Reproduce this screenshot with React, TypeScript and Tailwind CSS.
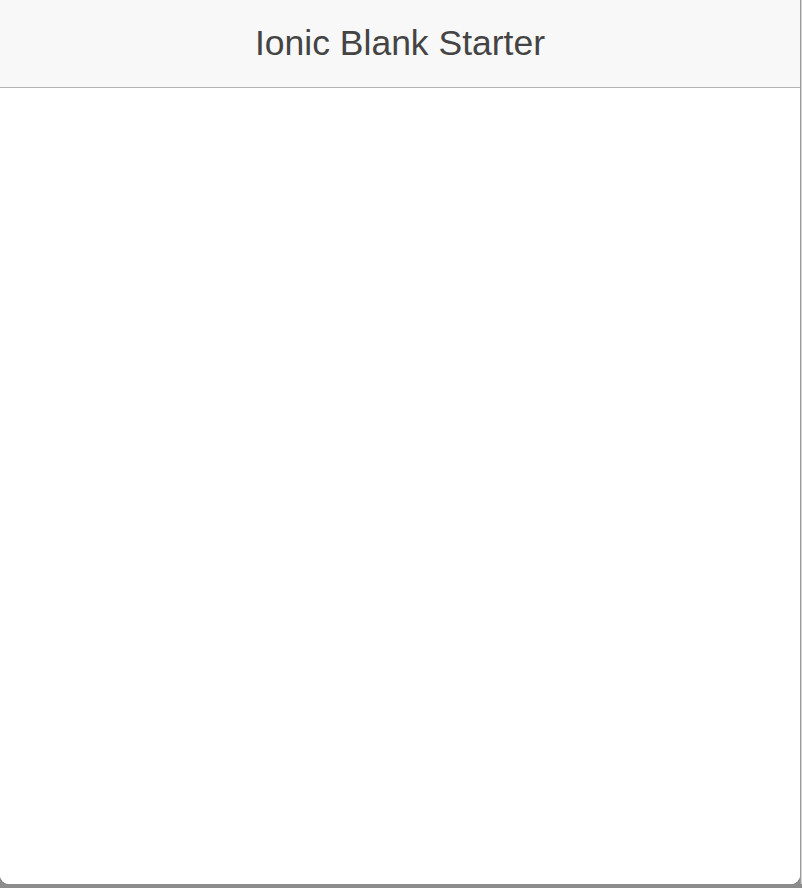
import React from "react";

const App = () => {
  return (
    <div className="w-[802px] h-[888px] bg-gradient-to-b from-[#c4c4c4] to-[#8c8c8c] overflow-hidden">
      <div className="flex h-[884px]">
        <div className="w-[800px] h-full bg-white rounded-b-[9px] overflow-hidden flex flex-col">
          <div className="h-[88px] shrink-0 bg-[#f8f8f8] border-b border-[#b2b2b2] flex items-center justify-center">
            <h1
              className="text-[35.5px] text-[#444444] leading-none"
              style={{ fontFamily: '"Liberation Sans", Arial, sans-serif' }}
            >
              Ionic Blank Starter
            </h1>
          </div>
          <div className="flex-1 bg-white"></div>
        </div>
        <div className="w-[1px] h-full bg-[#9c9c9c]"></div>
        <div className="w-[1px] h-full bg-[#d0d0d0]"></div>
      </div>
    </div>
  );
};

export default App;
